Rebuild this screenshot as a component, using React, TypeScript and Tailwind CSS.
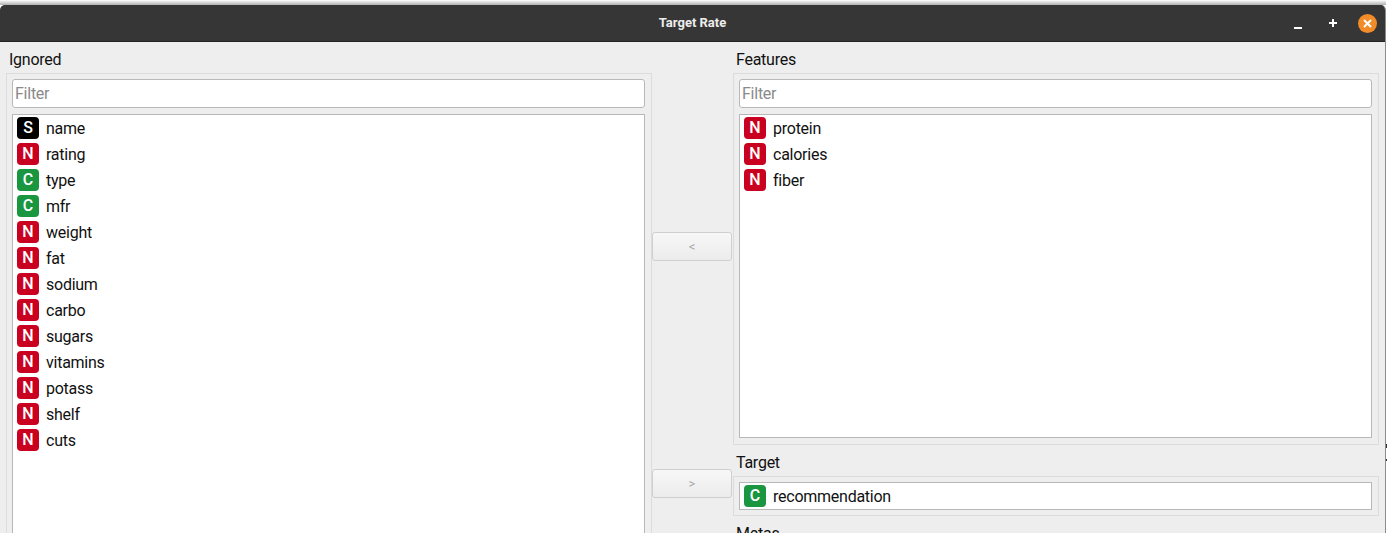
const ignored: [string, string][] = [
  ["S", "name"],
  ["N", "rating"],
  ["C", "type"],
  ["C", "mfr"],
  ["N", "weight"],
  ["N", "fat"],
  ["N", "sodium"],
  ["N", "carbo"],
  ["N", "sugars"],
  ["N", "vitamins"],
  ["N", "potass"],
  ["N", "shelf"],
  ["N", "cuts"],
];

const features: [string, string][] = [
  ["N", "protein"],
  ["N", "calories"],
  ["N", "fiber"],
];

const Badge = ({ kind }: { kind: string }) => (
  <span
    className={
      "flex h-[22px] w-[22px] shrink-0 items-center justify-center rounded-[4px] text-[16px] leading-none font-medium text-white " +
      (kind === "S" ? "bg-black" : kind === "C" ? "bg-[#1a9641]" : "bg-[#ca0020]")
    }
  >
    {kind}
  </span>
);

const Row = ({ kind, name }: { kind: string; name: string }) => (
  <div className="flex h-[26px] items-center gap-[7px] pl-[4px]">
    <Badge kind={kind} />
    <span className="pt-[2px] text-[16px] tracking-[-0.25px] text-[#111]">{name}</span>
  </div>
);

const Heading = ({ children }: { children: string }) => (
  <h2 className="flex h-[31px] shrink-0 items-center pt-[4px] pl-[3px] text-[16px] font-normal tracking-[-0.25px] text-[#111]">
    {children}
  </h2>
);

const Filter = () => (
  <div className="flex h-[29px] shrink-0 items-center rounded-[3px] border border-[#b8b8b8] bg-white pl-[2px] text-[16px] tracking-[-0.25px] text-[#8a8a8a]">
    Filter
  </div>
);

const MoveButton = ({ label }: { label: string }) => (
  <div className="flex h-[29px] w-[80px] items-center justify-center rounded-[3px] border border-[#cfcfcf] bg-gradient-to-b from-[#f7f7f7] to-[#ececec] text-[13px] text-[#a8a8a8]">
    {label}
  </div>
);

export default function App() {
  return (
    <div className="relative h-[533px] w-[1387px] overflow-hidden bg-white pr-[1px] font-['Roboto',sans-serif]">
      <div className="h-[5px] bg-gradient-to-b from-white to-[#b0b0b0]" />
      <div className="flex h-[528px] flex-col overflow-hidden rounded-t-[5px] border-r border-[#8c8c8c] bg-[#eeeeee]">
        <header className="relative flex h-[37px] shrink-0 items-center justify-center border-b border-[#222] bg-[#363636]">
          <span className="text-[13px] font-bold text-[#ededed]">Target Rate</span>
          <div className="absolute top-0 right-[8px] flex h-full items-center">
            <svg width="14" height="14" viewBox="0 0 14 14" className="mt-[5px]">
              <rect x="2" y="8" width="8" height="2" fill="#fff" />
            </svg>
            <svg width="14" height="14" viewBox="0 0 14 14" className="ml-[20px]">
              <path d="M3 7h8M7 3v8" stroke="#fff" strokeWidth="2" />
            </svg>
            <svg width="19" height="19" viewBox="0 0 19 19" className="ml-[18px]">
              <circle cx="9.5" cy="9.5" r="9.5" fill="#f28c28" />
              <path d="M6 6l7 7M13 6l-7 7" stroke="#fff" strokeWidth="2" />
            </svg>
          </div>
        </header>

        <div className="flex min-h-0 flex-1 pl-[6px]">
          <section className="flex w-[646px] shrink-0 flex-col">
            <Heading>Ignored</Heading>
            <div className="flex h-[480px] shrink-0 flex-col gap-[6px] border border-[#dcdcdc] pt-[5px] pr-[6px] pl-[5px]">
              <Filter />
              <div className="flex-1 border border-[#b8b8b8] bg-white">
                {ignored.map(([kind, name]) => (
                  <Row key={name} kind={kind} name={name} />
                ))}
              </div>
            </div>
          </section>

          <div className="flex w-[81px] shrink-0 flex-col pt-[190px]">
            <MoveButton label="<" />
            <div className="h-[208px] shrink-0" />
            <MoveButton label=">" />
          </div>

          <section className="flex w-[646px] shrink-0 flex-col">
            <Heading>Features</Heading>
            <div className="flex h-[372px] shrink-0 flex-col gap-[6px] border border-[#dcdcdc] pt-[5px] pr-[6px] pb-[6px] pl-[5px]">
              <Filter />
              <div className="flex-1 border border-[#b8b8b8] bg-white">
                {features.map(([kind, name]) => (
                  <Row key={name} kind={kind} name={name} />
                ))}
              </div>
            </div>
            <Heading>Target</Heading>
            <div className="h-[40px] shrink-0 border border-[#dcdcdc] pt-[5px] pr-[6px] pl-[5px]">
              <div className="h-[28px] border border-[#b8b8b8] bg-white">
                <Row kind="C" name="recommendation" />
              </div>
            </div>
            <Heading>Metas</Heading>
          </section>
        </div>
      </div>
      <div className="absolute top-[444px] right-0 h-[4px] w-[1px] bg-[#333]" />
      <div className="absolute top-[459px] right-0 h-[2px] w-[1px] bg-[#333]" />
    </div>
  );
}
